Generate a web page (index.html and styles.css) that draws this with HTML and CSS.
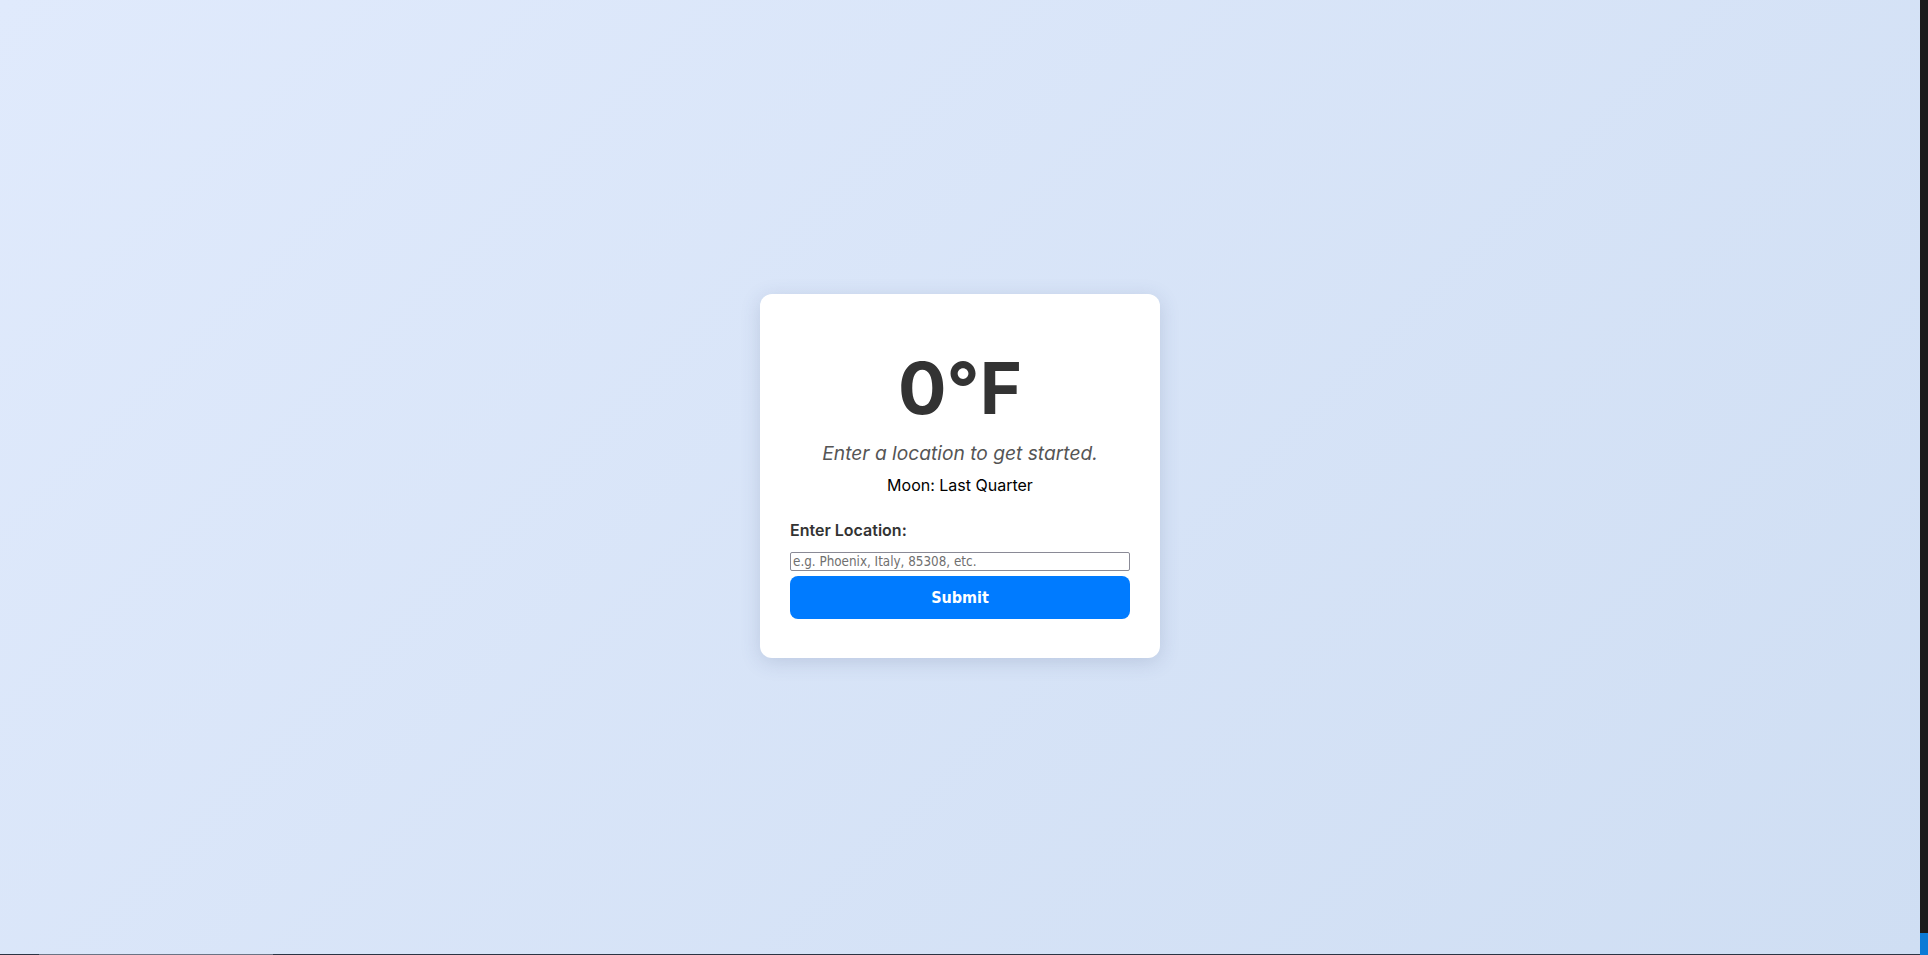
FILE: index.html
```html
<!DOCTYPE html>
<html lang="en">
<head>
<meta charset="utf-8">
<title>Weather</title>
<link rel="stylesheet" href="styles.css">
</head>
<body>
<div class="screen">
  <main class="page">
    <section class="card">
      <h1 class="temp">0°F</h1>
      <p class="desc">Enter a location to get started.</p>
      <p class="moon">Moon: Last Quarter</p>
      <form class="form">
        <label class="label" for="loc">Enter Location:</label>
        <input class="input" id="loc" type="text" placeholder="e.g. Phoenix, Italy, 85308, etc.">
        <button class="btn" type="button">Submit</button>
      </form>
    </section>
  </main>
  <div class="side"><div class="side-accent"></div></div>
  <div class="bottom-line"></div>
</div>
</body>
</html>
```

FILE: styles.css
```css
html, body {
  margin: 0;
  padding: 0;
  height: 100%;
  overflow: hidden;
}

.screen {
  display: grid;
  grid-template-columns: 1920px 8px;
  grid-template-rows: 954px 1px;
  width: 1928px;
  height: 955px;
}

.page {
  grid-column: 1;
  grid-row: 1;
  background: linear-gradient(135deg, #e0eafc 0%, #cfdef3 100%);
  display: flex;
  align-items: center;
  justify-content: center;
  font-family: "Inter", "Liberation Sans", sans-serif;
}

.side {
  grid-column: 2;
  grid-row: 1 / span 2;
  background: #1b1b1b;
  display: flex;
  flex-direction: column;
  justify-content: flex-end;
}

.side-accent {
  height: 22px;
  background: #0b7ad6;
}

.bottom-line {
  grid-column: 1;
  grid-row: 2;
  background: linear-gradient(90deg, #2c3444 0 39px, #6b7384 39px 273px, #2c3444 273px 100%);
}

.card {
  width: 340px;
  padding: 30px;
  background: #ffffff;
  border-radius: 12px;
  box-shadow: 0 4px 20px rgba(60, 80, 120, 0.18);
  text-align: center;
  margin-top: -2px;
}

.temp {
  margin: 20px 0 10px;
  font-size: 72px;
  font-weight: 700;
  color: #333333;
  line-height: normal;
}

.desc {
  margin: 0 0 10px;
  font-size: 19.2px;
  font-style: italic;
  color: #555555;
}

.moon {
  margin: 0 0 25px;
  font-size: 16px;
  color: #000000;
}

.form {
  display: flex;
  flex-direction: column;
  text-align: left;
  padding-bottom: 9px;
}

.label {
  font-size: 16px;
  font-weight: 600;
  color: #333333;
  margin-bottom: 12px;
}

.input {
  font-family: "DejaVu Sans Condensed", "DejaVu Sans", sans-serif;
  font-stretch: condensed;
  font-size: 13.333px;
  padding: 1px 2px;
  border: 1px solid #8a8a96;
  border-radius: 2px;
  margin: 0;
}

.input::placeholder {
  color: #6f6f6f;
}

.btn {
  margin-top: 5px;
  height: 43px;
  border: none;
  border-radius: 8px;
  background: #007bff;
  color: #ffffff;
  font-family: "DejaVu Sans Condensed", "DejaVu Sans", sans-serif;
  font-stretch: condensed;
  font-size: 16px;
  font-weight: 700;
}
```
